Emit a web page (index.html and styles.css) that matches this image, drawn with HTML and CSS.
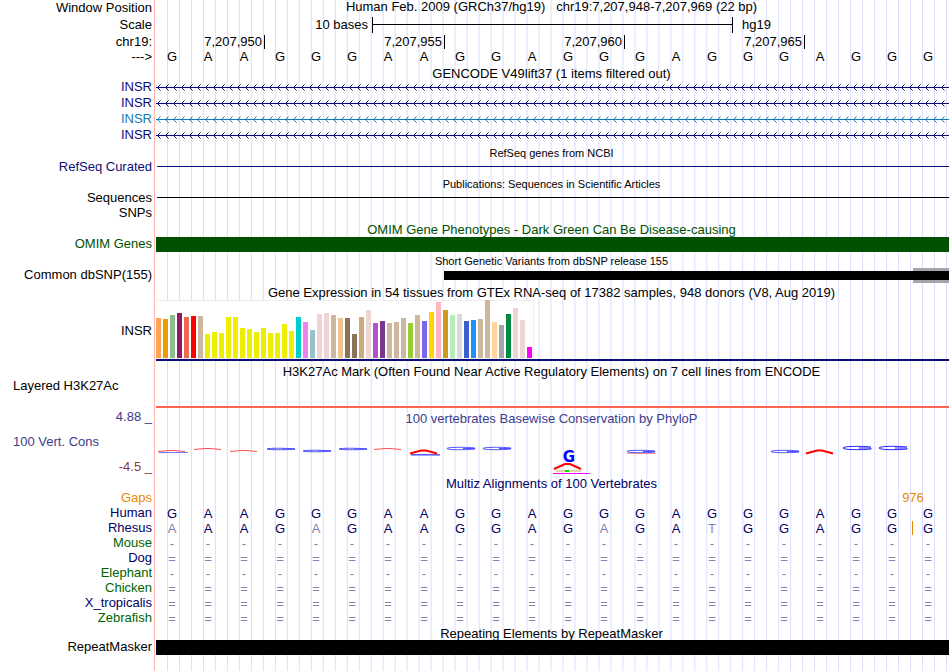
FILE: index.html
```
<!DOCTYPE html>
<html lang="en">
<head>
    <meta charset="UTF-8">
    <meta name="viewport" content="width=device-width, initial-scale=1.0">
    <title>Human chr19:7,207,948-7,207,969</title>

    <link rel="stylesheet" href="styles.css">
</head>
<body>
    <svg class="defs" aria-hidden="true">
        <defs>
            <pattern id="strandBlue" width="8" height="16" patternUnits="userSpaceOnUse">
                <path d="M0 7.5H8M4.5 4.5L1.5 7.5L4.5 10.5" fill="none" stroke="#0c0c78"/>
            </pattern>
            <pattern id="strandLight" width="8" height="16" patternUnits="userSpaceOnUse">
                <path d="M0 7.5H8M4.5 4.5L1.5 7.5L4.5 10.5" fill="none" stroke="#1478b4"/>
            </pattern>
        </defs>
    </svg>

    <main class="browser">
        <div class="row position">
            <div class="label">Window Position</div>
            <div class="title">Human Feb. 2009 (GRCh37/hg19) &nbsp; chr19:7,207,948-7,207,969 (22 bp)</div>
        </div>
        <div class="row scale">
            <div class="label">Scale</div>
            <div class="ruler">
                <span class="scale-text">10 bases</span>
                <span class="scale-bar"></span>
                <span class="scale-db">hg19</span>
            </div>
        </div>
        <div class="row coords">
            <div class="label">chr19:</div>
            <div class="ruler">
                <span class="tick first">7,207,950</span>
                <span class="tick">7,207,955</span>
                <span class="tick">7,207,960</span>
                <span class="tick">7,207,965</span>
            </div>
        </div>
        <div class="row sequence">
            <div class="label">---&gt;</div>
            <div class="bases" data-seq="GAAGGGAAGGAGGGAGGGAGGG"></div>
        </div>

        <div class="row tight"><div class="title">GENCODE V49lift37 (1 items filtered out)</div></div>
        <div class="row gene">
            <div class="label blue">INSR</div>
            <svg class="strand"><rect width="100%" height="16" fill="url(#strandBlue)"/></svg>
        </div>
        <div class="row gene">
            <div class="label blue">INSR</div>
            <svg class="strand"><rect width="100%" height="16" fill="url(#strandBlue)"/></svg>
        </div>
        <div class="row gene">
            <div class="label light">INSR</div>
            <svg class="strand"><rect width="100%" height="16" fill="url(#strandLight)"/></svg>
        </div>
        <div class="row gene">
            <div class="label blue">INSR</div>
            <svg class="strand"><rect width="100%" height="16" fill="url(#strandBlue)"/></svg>
        </div>

        <div class="row small"><div class="title">RefSeq genes from NCBI</div></div>
        <div class="row">
            <div class="label blue">RefSeq Curated</div>
            <div class="line navy-line"></div>
        </div>

        <div class="row small"><div class="title">Publications: Sequences in Scientific Articles</div></div>
        <div class="row">
            <div class="label">Sequences</div>
            <div class="line"></div>
        </div>
        <div class="row gene">
            <div class="label">SNPs</div>
        </div>

        <div class="row"><div class="title green">OMIM Gene Phenotypes - Dark Green Can Be Disease-causing</div></div>
        <div class="row">
            <div class="label green">OMIM Genes</div>
            <div class="block omim"></div>
        </div>

        <div class="row small"><div class="title">Short Genetic Variants from dbSNP release 155</div></div>
        <div class="row">
            <div class="label">Common dbSNP(155)</div>
            <div class="ruler">
                <div class="snp"></div>
                <div class="snp-edge"></div>
            </div>
        </div>

        <div class="row expression-title"><div class="title">Gene Expression in 54 tissues from GTEx RNA-seq of 17382 samples, 948 donors (V8, Aug 2019)</div></div>
        <div class="row expression">
            <div class="label">INSR</div>
            <div class="gtex"><div class="chart" id="gtex"></div></div>
        </div>

        <div class="row mark-title"><div class="title">H3K27Ac Mark (Often Found Near Active Regulatory Elements) on 7 cell lines from ENCODE</div></div>
        <div class="row layered">
            <div class="label left">Layered H3K27Ac</div>
            <div class="signal"></div>
        </div>

        <div class="row">
            <div class="cons-labels">
                <div class="label phylop">4.88 _</div>
                <div class="label left phylop">100 Vert. Cons</div>
                <div class="label negative">-4.5 _</div>
            </div>
            <div class="cons">
                <div class="title phylop">100 vertebrates Basewise Conservation by PhyloP</div>
                <div class="logo" id="logo"></div>
            </div>
        </div>

        <div class="row"><div class="title navy">Multiz Alignments of 100 Vertebrates</div></div>
        <div class="row">
            <div class="label orange">Gaps</div>
            <div class="ruler"><span class="gap orange">976</span></div>
        </div>
        <div class="row">
            <div class="label navy">Human</div>
            <div class="bases navy" data-seq="GAAGGGAAGGAGGGAGGGAGGG"></div>
        </div>
        <div class="row">
            <div class="label navy">Rhesus</div>
            <!-- lower case = differs from human -->
            <div class="bases navy insert" data-seq="aAAGaGAAGGAGaGAtGGAGGG"></div>
        </div>
        <div class="row">
            <div class="label darkgreen">Mouse</div>
            <div class="bases" data-seq="----------------------"></div>
        </div>
        <div class="row">
            <div class="label navy">Dog</div>
            <div class="bases" data-seq="======================"></div>
        </div>
        <div class="row">
            <div class="label darkgreen">Elephant</div>
            <div class="bases" data-seq="----------------------"></div>
        </div>
        <div class="row">
            <div class="label darkgreen">Chicken</div>
            <div class="bases" data-seq="======================"></div>
        </div>
        <div class="row">
            <div class="label navy">X_tropicalis</div>
            <div class="bases" data-seq="======================"></div>
        </div>
        <div class="row">
            <div class="label darkgreen">Zebrafish</div>
            <div class="bases" data-seq="======================"></div>
        </div>

        <div class="row tight"><div class="title">Repeating Elements by RepeatMasker</div></div>
        <div class="row">
            <div class="label">RepeatMasker</div>
            <div class="block"></div>
        </div>
    </main>

    <script src="tracks.js"></script>
</body>
</html>
```
FILE: styles.css
```
* {
    margin: 0;
    padding: 0;
    box-sizing: border-box;
}
body {
    background-color: #fff;
    color: #000;
    font-family: "Liberation Sans", Arial, Helvetica, sans-serif;
    font-size: 13px;
    line-height: 15px;
    padding-right: 1px;
}
.defs {
    position: absolute;
    width: 0;
    height: 0;
}
/* red edge of the tracks, then one guide line every third of a base */
.browser {
    position: relative;
    padding-bottom: 16px;
}
.browser::before {
    content: "";
    position: absolute;
    z-index: -1;
    top: 0;
    bottom: 0;
    left: 154px;
    right: 0;
    background-image:
        linear-gradient(to right, #ffb4b4 1px, #fff 1px),
        linear-gradient(to right, #dcdcff 1px, transparent 1px);
    background-size: 2px 100%, calc((100% - 3px) / 66) 100%;
    background-position: 0 0, 13px 0;
    background-repeat: no-repeat, repeat;
}
.row {
    display: grid;
    grid-template-columns: 154px minmax(0, 1fr);
    min-height: 15px;
    white-space: nowrap;
}
.label {
    text-align: right;
    line-height: 14px;
    padding-right: 2px;
}
.label.left {
    text-align: left;
    padding-left: 13px;
}
.title {
    grid-column: 2;
    text-align: center;
    line-height: 14px;
    padding-top: 1px;
}
.position .title {
    padding-top: 0;
}
.position, .sequence, .gene {
    min-height: 16px;
}
.scale, .coords {
    min-height: 17px;
}
.position .label, .scale .label, .coords .label, .expression .label {
    align-self: center;
}
.sequence .bases {
    line-height: 14px;
}
.tight {
    height: 14px;
    min-height: 14px;
}
.small {
    font-size: 11px;
    padding-top: 1px;
}
.expression-title {
    padding-top: 2px;
}
.mark-title {
    padding-top: 3px;
}

/* colours */
.blue { color: #0c0c78; }
.light { color: #1478b4; }
.green { color: #005000; }
.darkgreen { color: #006400; }
.navy { color: #000064; }
.orange { color: #e68a00; }
.phylop { color: #3c3c8c; }
.negative { color: #8c3c3c; }

/* one column per base */
.bases, .logo, .ruler {
    display: grid;
    grid-template-columns: repeat(22, minmax(0, 1fr));
}
.bases, .logo {
    padding-right: 3px;
}
.bases {
    text-align: center;
}
.ruler {
    padding-left: 3px;
}
.bases .diff {
    color: #8282b4;
}
.insert span:last-child {
    background: linear-gradient(#e68a00, #e68a00) no-repeat 2px 0 / 1px 14px;
}
.gap {
    grid-column: 21 / 23;
    text-align: center;
    line-height: 14px;
}
.scale-text {
    grid-column: 1 / 7;
    text-align: right;
    padding-right: 5px;
    align-self: center;
}
.scale-bar {
    grid-column: 7 / 17;
    border: solid #000;
    border-width: 0 1px;
    margin: 1px 0 0 -1px;
    background: linear-gradient(#000, #000) no-repeat 0 7px / 100% 1px;
}
.scale-db {
    grid-column: 17 / 20;
    padding-left: 9px;
    align-self: center;
}
.tick {
    grid-column: span 5;
    text-align: right;
    line-height: 14px;
    padding-right: 2px;
    border-right: 1px solid #000;
    margin: 2px 0 1px;
}
.tick.first {
    grid-column: span 3;
}

/* items */
.strand {
    display: block;
    width: calc(100% - 2px);
    height: 16px;
    margin-left: 2px;
}
.line {
    height: 1px;
    margin: 6px 0 0 3px;
    background-color: #000;
}
.navy-line {
    background-color: #0c0c78;
}
.block {
    margin-left: 2px;
    background-color: #000;
}
.omim {
    background-color: #005000;
}
.snp {
    grid-area: 1 / 9 / 2 / 23;
    margin: 3px 0 3px -1px;
    background-color: #000;
    z-index: 1;
}
.snp-edge {
    grid-area: 1 / 22 / 2 / 23;
    background-color: #a5a5a5;
}
.gtex {
    margin-left: 2px;
    border-bottom: 2px solid #0c0c78;
}
.chart {
    display: flex;
    align-items: flex-end;
    gap: 2px;
    width: max-content;
    height: 59px;
    padding-right: 1px;
    background-color: #fff;
    border: solid #eee;
    border-width: 1px 1px 1px 0;
}
.bar {
    width: 5px;
}
.layered {
    min-height: 29px;
}
.signal {
    margin-left: 2px;
    border-bottom: 2px solid #ff6450;
}
.cons-labels {
    display: flex;
    flex-direction: column;
    justify-content: space-between;
    padding: 2px 0;
}
.cons {
    padding-top: 3px;
}
.logo svg {
    display: block;
    width: 36px;
    height: 50px;
    overflow: visible;
}
.logo text {
    font-family: "DejaVu Sans", sans-serif;
    font-size: 15px;
    font-weight: bold;
    text-anchor: middle;
}
```
FILE: tracks.js
```
// Sequence rows
document.querySelectorAll(".bases").forEach(row => {
    for (const base of row.dataset.seq) {
        const cell = document.createElement("span");
        cell.textContent = base.toUpperCase();
        if (base !== base.toUpperCase() || base === "-" || base === "=") {
            cell.className = "diff";
        }
        row.appendChild(cell);
    }
});

// GTEx medians: [height, colour]
const tissues = [
    [40, "#ffa54f"], [39, "#ee9a00"], [43, "#8fbc8f"], [45, "#8b1c62"], [41, "#ee6a50"],
    [42, "#ff0000"], [42, "#cdb79e"], [24, "#eeee00"], [26, "#eeee00"], [25, "#eeee00"],
    [41, "#eeee00"], [41, "#eeee00"], [30, "#eeee00"], [29, "#eeee00"], [26, "#eeee00"],
    [30, "#eeee00"], [25, "#eeee00"], [25, "#eeee00"], [34, "#eeee00"], [27, "#eeee00"],
    [41, "#00cdcd"], [36, "#ee82ee"], [28, "#9ac0cd"], [44, "#eed5d2"], [45, "#eed5d2"],
    [43, "#cdb79e"], [40, "#eec591"], [40, "#8b7355"], [24, "#8b7355"], [41, "#cdaa7d"],
    [48, "#eed5d2"], [35, "#b452cd"], [37, "#7a378b"], [35, "#cdb79e"], [36, "#cdb79e"],
    [40, "#cdb79e"], [35, "#9acd32"], [43, "#cdb79e"], [37, "#7a67ee"], [46, "#ffd700"],
    [56, "#ffb6c1"], [48, "#cd9b1d"], [43, "#b4eeb4"], [44, "#d9d9d9"], [37, "#3a5fcd"],
    [38, "#1e90ff"], [39, "#cdb79e"], [58, "#cdb79e"], [36, "#ffd39b"], [33, "#a6a6a6"],
    [44, "#008b45"], [50, "#eed5d2"], [38, "#eed5d2"], [11, "#ff00ff"]
];
const gtex = document.getElementById("gtex");
tissues.forEach(([height, colour]) => {
    const bar = document.createElement("div");
    bar.className = "bar";
    bar.style.height = height + "px";
    bar.style.backgroundColor = colour;
    gtex.appendChild(bar);
});

// PhyloP marks, one 36px wide drawing per base
const peak = (top, height, width = 1, colour = "#ff5050") =>
    `<path d="M4 ${top + height}L15 ${top}H20L31 ${top + height}" fill="none" stroke="${colour}" stroke-width="${width}"/>`;
const ring = (top, height, colour = "#5050ff") =>
    `<path d="M33 ${top + 0.5}C26 ${top - 0.5} 5 ${top - 0.5} 5 ${top + height / 2}S26 ${top + height + 0.5} 33 ${top + height - 0.5}V${top + height / 2}H21" fill="none" stroke="${colour}" stroke-width="1"/>`;
const flat = (y, colour) =>
    `<path d="M5 ${y}H34" stroke="${colour}" stroke-width="1"/>`;

const marks = {
    0: flat(26.5, "#7878ff") + peak(24.5, 1),
    1: peak(22.5, 1),
    2: peak(24.5, 1),
    3: ring(22.5, 1),
    4: ring(24.5, 1),
    5: ring(22.5, 1),
    6: peak(22.5, 1),
    7: flat(28.5, "#5a5aff") + flat(29.5, "#a0a0ff") + peak(24.5, 3, 2, "#f00"),
    8: ring(21.5, 2),
    9: ring(21.5, 2),
    11: `<text x="19" y="36" fill="#00f">G</text>
         <path d="M6 45H31" stroke="#dcdca0" stroke-width="2"/>
         <path d="M15 45H19" stroke="#00e600" stroke-width="2"/>
         <path d="M3 47.5H40" stroke="#f0f"/>` + peak(38, 5, 2, "#f00"),
    13: flat(27.5, "#ff9696") + ring(24.5, 2),
    17: ring(24.5, 2),
    18: peak(24.5, 3, 2, "#f00"),
    19: ring(20.5, 3, "#1e1eff"),
    20: ring(20.5, 3, "#1e1eff")
};
const logo = document.getElementById("logo");
for (let i = 0; i < 22; i++) {
    logo.insertAdjacentHTML("beforeend", `<svg viewBox="0 0 36 50">${marks[i] || ""}</svg>`);
}
```
